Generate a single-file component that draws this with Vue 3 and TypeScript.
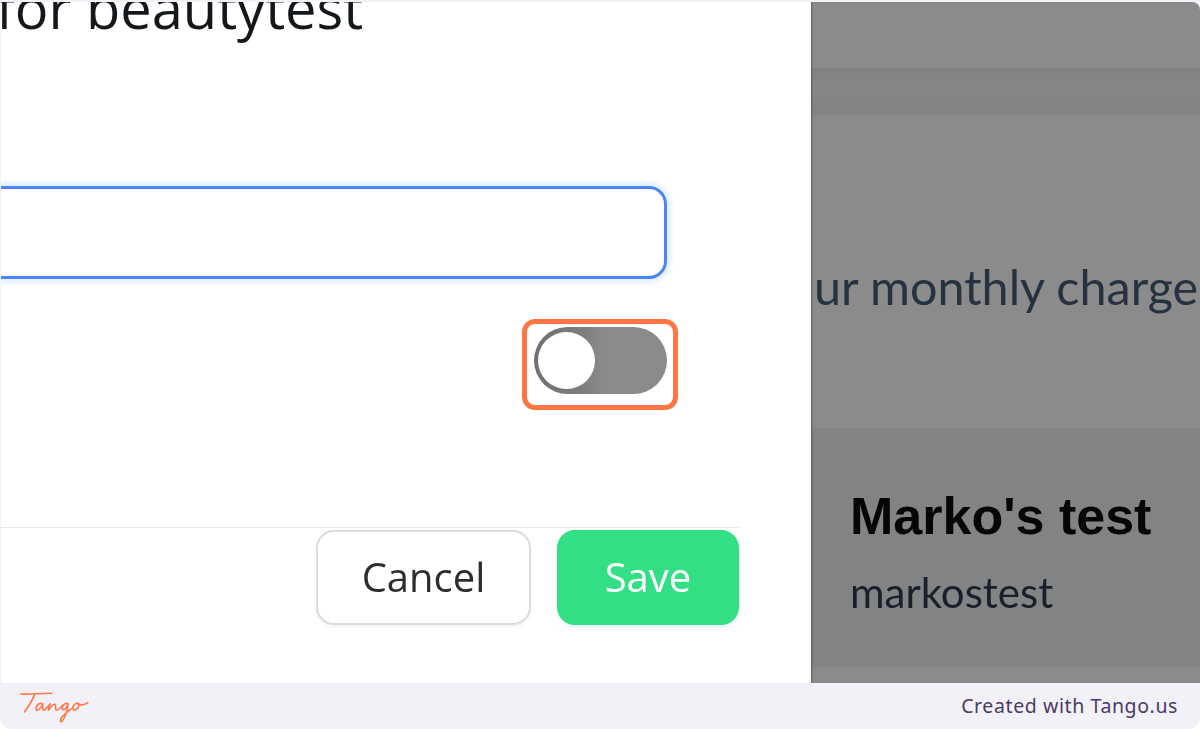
<script setup lang="ts">
const title = 'for beautytest'
</script>

<template>
  <div class="page">
    <main class="shot">
      <section class="modal">
        <h1 class="title">{{ title }}</h1>
        <div class="field"></div>
        <div class="toggle-row">
          <div class="toggle">
            <span class="knob"></span>
            <span class="mark"></span>
          </div>
        </div>
        <div class="actions">
          <button class="btn cancel" type="button">Cancel</button>
          <button class="btn save" type="button">Save</button>
        </div>
      </section>
      <aside class="behind">
        <div class="band"></div>
        <p class="charge">ur monthly charge</p>
        <div class="card">
          <h2 class="card-title">Marko's test</h2>
          <p class="card-sub">markostest</p>
        </div>
      </aside>
    </main>
    <footer class="foot">
      <svg class="logo" width="70" height="34" viewBox="0 0 64 31" fill="none" stroke="#ff7a4d" stroke-width="1.5" stroke-linecap="round" stroke-linejoin="round" role="img" aria-label="Tango">
        <path d="M1 3.5 C8 4.5 20 2.5 29 3" />
        <path d="M13.5 3.5 C11.5 9 8 15 4 20" />
        <path d="M21 13 C17.5 10.5 13.5 15 15 18.5 C16.5 19.5 19.5 15.5 21 13 C20.5 15.5 20 18 22 18.5 C24 17.5 25 15 27.5 12.5 C27 14.5 26 16.5 26 18.5 C28 15.5 30 12.5 32 13 C33.5 14 31.5 17 33 18.5 C35 18.5 37 16 39 14" />
        <path d="M44 12.5 C40.5 11 37.5 15.5 39 18 C41 18.5 43 15 44 12.5 C43.5 17 42 24 38.5 28.5 C36.5 30 36 27 38.5 24.5 C41 22 44 19.5 47 17" />
        <path d="M53 12 C49.5 12 47 16 49 18 C52 19 55 15 53 12 C54 14 58 14.5 62 11.5" />
      </svg>
      <span class="credit">Created with Tango.us</span>
    </footer>
  </div>
</template>

<style scoped>
.page {
  width: 1200px;
  height: 729px;
  display: flex;
  flex-direction: column;
  padding-top: 2px;
  box-sizing: border-box;
  background: #f3f1f8;
  border-radius: 0 0 12px 12px;
  overflow: hidden;
}
.shot {
  flex: 1;
  min-height: 0;
  display: flex;
  margin-left: 1px;
  border-top-right-radius: 8px;
  overflow: hidden;
}
.modal {
  width: 810px;
  flex: none;
  background: #fff;
  display: flex;
  flex-direction: column;
  box-shadow: 1px 0 2px rgba(60, 60, 60, 0.55);
  z-index: 1;
  overflow: hidden;
}
.title {
  margin: -25px 0 0 -5px;
  height: 88px;
  flex: none;
  white-space: nowrap;
  font: 500 56px/60px "Open Sans", sans-serif;
  color: #15181b;
  filter: blur(0.5px);
}
.field {
  margin: 121px 144px 0 -30px;
  height: 87px;
  border: 3px solid #4a86f7;
  border-radius: 18px;
  box-shadow: 0 0 5px 4px #e2efff;
  filter: blur(0.3px);
  flex: none;
}
.toggle-row {
  display: flex;
  justify-content: flex-end;
  margin: 48px 144px 0 0;
}
.toggle {
  position: relative;
  width: 133px;
  height: 67px;
  border-radius: 34px;
  background: linear-gradient(90deg, #6f716f 0, #7d7e7d 38%, #8b8b8b 52%);
}
.knob {
  position: absolute;
  left: 4px;
  top: 5px;
  width: 57px;
  height: 57px;
  border-radius: 50%;
  background: #fff;
  filter: blur(0.5px);
}
.mark {
  position: absolute;
  left: -12px;
  top: -8px;
  width: 146px;
  height: 81px;
  border: 5.5px solid #ff7543;
  border-radius: 13px;
}
.actions {
  margin-top: 133px;
  width: 738px;
  flex: none;
  height: 97px;
  box-sizing: border-box;
  border-top: 1.5px solid #e8e8e8;
  padding-top: 1.5px;
  display: flex;
  justify-content: flex-end;
  align-items: flex-start;
  gap: 26px;
}
.btn {
  height: 95px;
  border-radius: 18px;
  font: 400 40px/1 "Open Sans", sans-serif;
  padding: 0;
  filter: blur(0.4px);
}
.cancel {
  width: 215px;
  background: #fff;
  color: #2b2e30;
  border: 2px solid #dcdcdc;
  box-shadow: 0 2px 3px rgba(0, 0, 0, 0.05);
}
.save {
  width: 182px;
  background: #33df84;
  color: #fff;
  border: 0;
  font-weight: 500;
  box-shadow: 0 3px 4px rgba(90, 170, 255, 0.15);
}
.behind {
  flex: 1;
  background: #8b8b8b;
  display: flex;
  flex-direction: column;
  min-width: 0;
  overflow: hidden;
}
.band {
  margin-top: 66px;
  height: 47px;
  flex: none;
  background: linear-gradient(180deg, #808180 0, #858685 40%, #828382 100%);
}
.charge {
  margin: 141px 0 0 3px;
  white-space: nowrap;
  font: 400 48.5px/60px Lato, sans-serif;
  color: #26323f;
  filter: blur(0.5px);
}
.card {
  margin-top: 112px;
  height: 239px;
  flex: none;
  box-sizing: border-box;
  background: #828384;
  padding: 55px 0 0 39px;
  filter: blur(0.4px);
}
.card-title {
  margin: 0;
  font: 700 52px/66px "Liberation Sans", sans-serif;
  color: #060606;
  white-space: nowrap;
}
.card-sub {
  margin: 20px 0 0;
  font: 400 42px/46px Lato, sans-serif;
  color: #17202b;
  white-space: nowrap;
}
.foot {
  height: 46px;
  flex: none;
  display: flex;
  align-items: center;
  justify-content: space-between;
  padding: 0 22px 0 20px;
}
.logo {
  display: block;
  margin-top: 2px;
}
.credit {
  font: 400 19.5px/1 "Noto Sans", sans-serif;
  letter-spacing: 0.6px;
  color: #4a3b63;
}
</style>

<style>
html, body {
  margin: 0;
  background: #fff;
}
</style>
